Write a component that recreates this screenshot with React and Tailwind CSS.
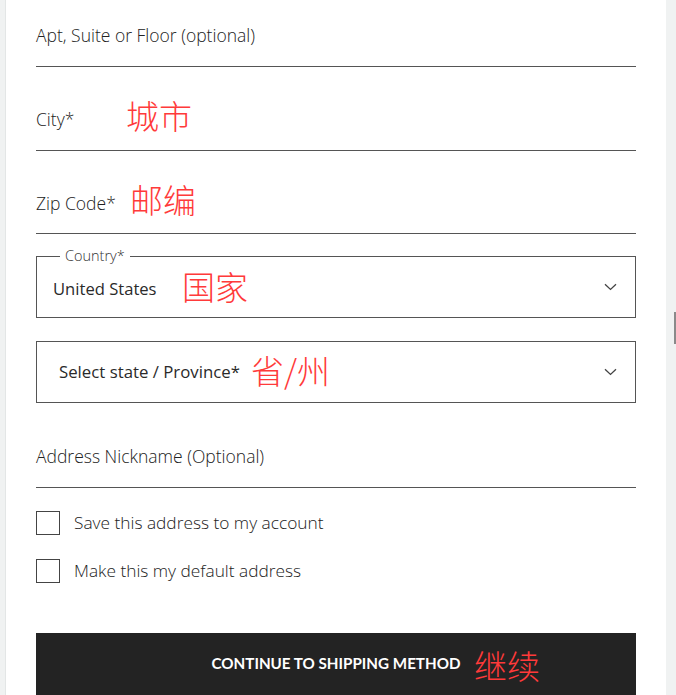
import React from "react";

const font = { fontFamily: '"Open Sans", "Noto Sans", sans-serif' };
const cjk = { fontFamily: '"Noto Sans CJK SC", "Noto Sans", sans-serif' };

function Chevron() {
  return (
    <svg width="13" height="8" viewBox="0 0 13 8" fill="none">
      <path d="M1 1.2 L6.5 6.4 L12 1.2" stroke="#444" strokeWidth="1.3" />
    </svg>
  );
}

function Note({ children, className }) {
  return (
    <span
      className={"absolute text-[33px] leading-none font-light text-[#ff3a3a] whitespace-nowrap " + className}
      style={cjk}
    >
      {children}
    </span>
  );
}

export default function App() {
  return (
    <div className="relative w-[676px] h-[695px] overflow-hidden bg-[#f0f2f2] flex" style={font}>
      <div className="w-[6px] h-full shrink-0 border-r border-[#e3e6e6]" />
      <div className="w-[660px] h-full shrink-0 bg-white px-[30px] flex flex-col text-[#333]">
        <div className="h-[67px] shrink-0 flex items-end pb-[19px] border-b border-[#555] text-[17.5px] leading-[24px] font-light text-[#222]">
          Apt, Suite or Floor (optional)
        </div>
        <div className="h-[84px] shrink-0 flex items-end pb-[19px] border-b border-[#555] text-[17.5px] leading-[24px] font-light text-[#222]">
          City*
        </div>
        <div className="h-[83px] shrink-0 flex items-end pb-[18px] border-b border-[#555] text-[17.5px] leading-[24px] font-light text-[#222]">
          Zip Code*
        </div>

        <div className="relative shrink-0 mt-[22px] h-[62px] border border-[#555] flex items-center justify-between pl-[16px] pr-[18px]">
          <span className="absolute left-[23px] top-[-10px] px-[5px] bg-white text-[14.5px] leading-[18px] font-light text-[#333]">
            Country*
          </span>
          <span className="text-[16.6px] leading-[24px] text-[#2a2a2a] mt-[3px]">United States</span>
          <Chevron />
        </div>

        <div className="shrink-0 mt-[23px] h-[62px] border border-[#555] flex items-center justify-between pl-[22px] pr-[18px]">
          <span className="text-[16.8px] leading-[24px] text-[#2a2a2a]">Select state / Province*</span>
          <Chevron />
        </div>

        <div className="h-[85px] shrink-0 flex items-end pb-[19px] border-b border-[#555] text-[17.5px] leading-[24px] font-light text-[#222]">
          Address Nickname (Optional)
        </div>

        <label className="shrink-0 mt-[23px] flex items-center gap-[14px]">
          <span className="w-[24px] h-[24px] border border-[#444] bg-white" />
          <span className="text-[17.3px] leading-[24px] font-light text-[#222]">Save this address to my account</span>
        </label>
        <label className="shrink-0 mt-[24px] flex items-center gap-[14px]">
          <span className="w-[24px] h-[24px] border border-[#444] bg-white" />
          <span className="text-[17.3px] leading-[24px] font-light text-[#222]">Make this my default address</span>
        </label>

        <button className="shrink-0 mt-[50px] h-[70px] bg-[#232323] flex justify-center items-start pt-[20px]">
          <span
            className="text-white text-[15.2px] leading-[20px] font-bold"
            style={{ fontFamily: 'Lato, "Open Sans", sans-serif' }}
          >
            CONTINUE TO SHIPPING METHOD
          </span>
        </button>
      </div>
      <div className="flex-1 h-full relative">
        <div className="absolute right-0 top-[312px] w-[2px] h-[32px] bg-[#8a8a8a]" />
      </div>

      <Note className="left-[126px] top-[99px]">城市</Note>
      <Note className="left-[130px] top-[183px]">邮编</Note>
      <Note className="left-[182px] top-[270px]">国家</Note>
      <Note className="left-[251px] top-[354px]">省/州</Note>
      <Note className="left-[474px] top-[649px]">继续</Note>
    </div>
  );
}
